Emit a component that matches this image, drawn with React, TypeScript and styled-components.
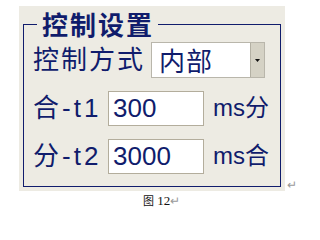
import React from "react";
import styled, { createGlobalStyle } from "styled-components";

const Global = createGlobalStyle`
  html, body { margin: 0; padding: 0; background: #ffffff; }
  body { width: 304px; height: 217px; overflow: hidden; }
`;

const NAVY = "#101c6c";

const Page = styled.div`
  display: flex;
  flex-direction: column;
  padding-top: 6px;
`;

const PanelRow = styled.div`
  display: flex;
  align-items: flex-end;
  padding-left: 19px;
`;

const Panel = styled.div`
  width: 266px;
  height: 185px;
  box-sizing: border-box;
  background: #edebe3;
  padding: 6px 4px 4px 4px;
  display: flex;
`;

const Group = styled.fieldset`
  flex: 1;
  margin: 0;
  border: 1px solid ${NAVY};
  padding: 6px 0 0 9px;
  display: flex;
  flex-direction: column;
  gap: 12px;
  min-width: 0;
`;

const Legend = styled.legend`
  margin-left: 4px;
  padding: 0 4px 0 5px;
  font-family: "Noto Sans CJK SC", sans-serif;
  font-weight: 700;
  font-size: 26px;
  line-height: 24px;
  letter-spacing: 2px;
  color: ${NAVY};
`;

const Row = styled.div`
  display: flex;
  align-items: center;
  height: 36px;
  gap: 4px;
`;

const Label = styled.span<{ $width: number }>`
  width: ${(p) => p.$width}px;
  flex: none;
  font-family: "Liberation Sans", "Noto Sans CJK SC", sans-serif;
  font-size: 26px;
  letter-spacing: 2px;
  color: ${NAVY};
  white-space: nowrap;
  line-height: 36px;
`;

const Latin = styled.span`
  letter-spacing: 3px;
  margin-left: 1px;
`;

const Unit = styled.span`
  margin-left: 5px;
  font-family: "Liberation Sans", "Noto Sans CJK SC", sans-serif;
  font-size: 24px;
  color: ${NAVY};
  white-space: nowrap;
  line-height: 36px;
`;

const Select = styled.div`
  width: 114px;
  height: 36px;
  box-sizing: border-box;
  border: 1px solid #b9b6ab;
  background: #ffffff;
  display: flex;
`;

const SelectValue = styled.span`
  flex: 1;
  padding-left: 7px;
  font-family: "Noto Sans CJK SC", sans-serif;
  font-size: 26px;
  letter-spacing: 1px;
  line-height: 34px;
  color: ${NAVY};
`;

const DropButton = styled.span`
  width: 13px;
  background: #d5d2c5;
  border-left: 1px solid #b3b0a3;
  display: flex;
  align-items: center;
  justify-content: center;
`;

const Input = styled.div`
  width: 96px;
  height: 35px;
  box-sizing: border-box;
  border: 1px solid #b3ad9c;
  background: #ffffff;
  padding-left: 4px;
  font-family: "Liberation Sans", sans-serif;
  font-size: 26px;
  line-height: 33px;
  color: ${NAVY};
`;

const Mark = styled.span`
  font-family: "Liberation Serif", serif;
  font-size: 12px;
  color: #9a9a9a;
  margin-left: 2px;
  margin-bottom: -2px;
`;

const Caption = styled.div`
  padding-left: 143px;
  margin-top: 1px;
  font-family: "Liberation Serif", "Noto Sans CJK SC", serif;
  font-size: 13px;
  color: #111111;
`;

const CaptionGlyph = styled.span`
  font-family: "Noto Sans CJK SC", sans-serif;
  font-size: 11px;
`;

const CaptionMark = styled.span`
  color: #9a9a9a;
  font-size: 12px;
`;

export default function App() {
  return (
    <Page>
      <Global />
      <PanelRow>
        <Panel>
          <Group>
            <Legend>控制设置</Legend>
            <Row>
              <Label $width={114}>控制方式</Label>
              <Select>
                <SelectValue>内部</SelectValue>
                <DropButton>
                  <svg width="5" height="3" viewBox="0 0 5 3">
                    <path d="M0 0H5L2.5 3Z" fill="#111" />
                  </svg>
                </DropButton>
              </Select>
            </Row>
            <Row>
              <Label $width={71}>
                合<Latin>-t1</Latin>
              </Label>
              <Input>300</Input>
              <Unit>ms分</Unit>
            </Row>
            <Row>
              <Label $width={71}>
                分<Latin>-t2</Latin>
              </Label>
              <Input>3000</Input>
              <Unit>ms合</Unit>
            </Row>
          </Group>
        </Panel>
        <Mark>↵</Mark>
      </PanelRow>
      <Caption>
        <CaptionGlyph>图</CaptionGlyph> 12<CaptionMark>↵</CaptionMark>
      </Caption>
    </Page>
  );
}
